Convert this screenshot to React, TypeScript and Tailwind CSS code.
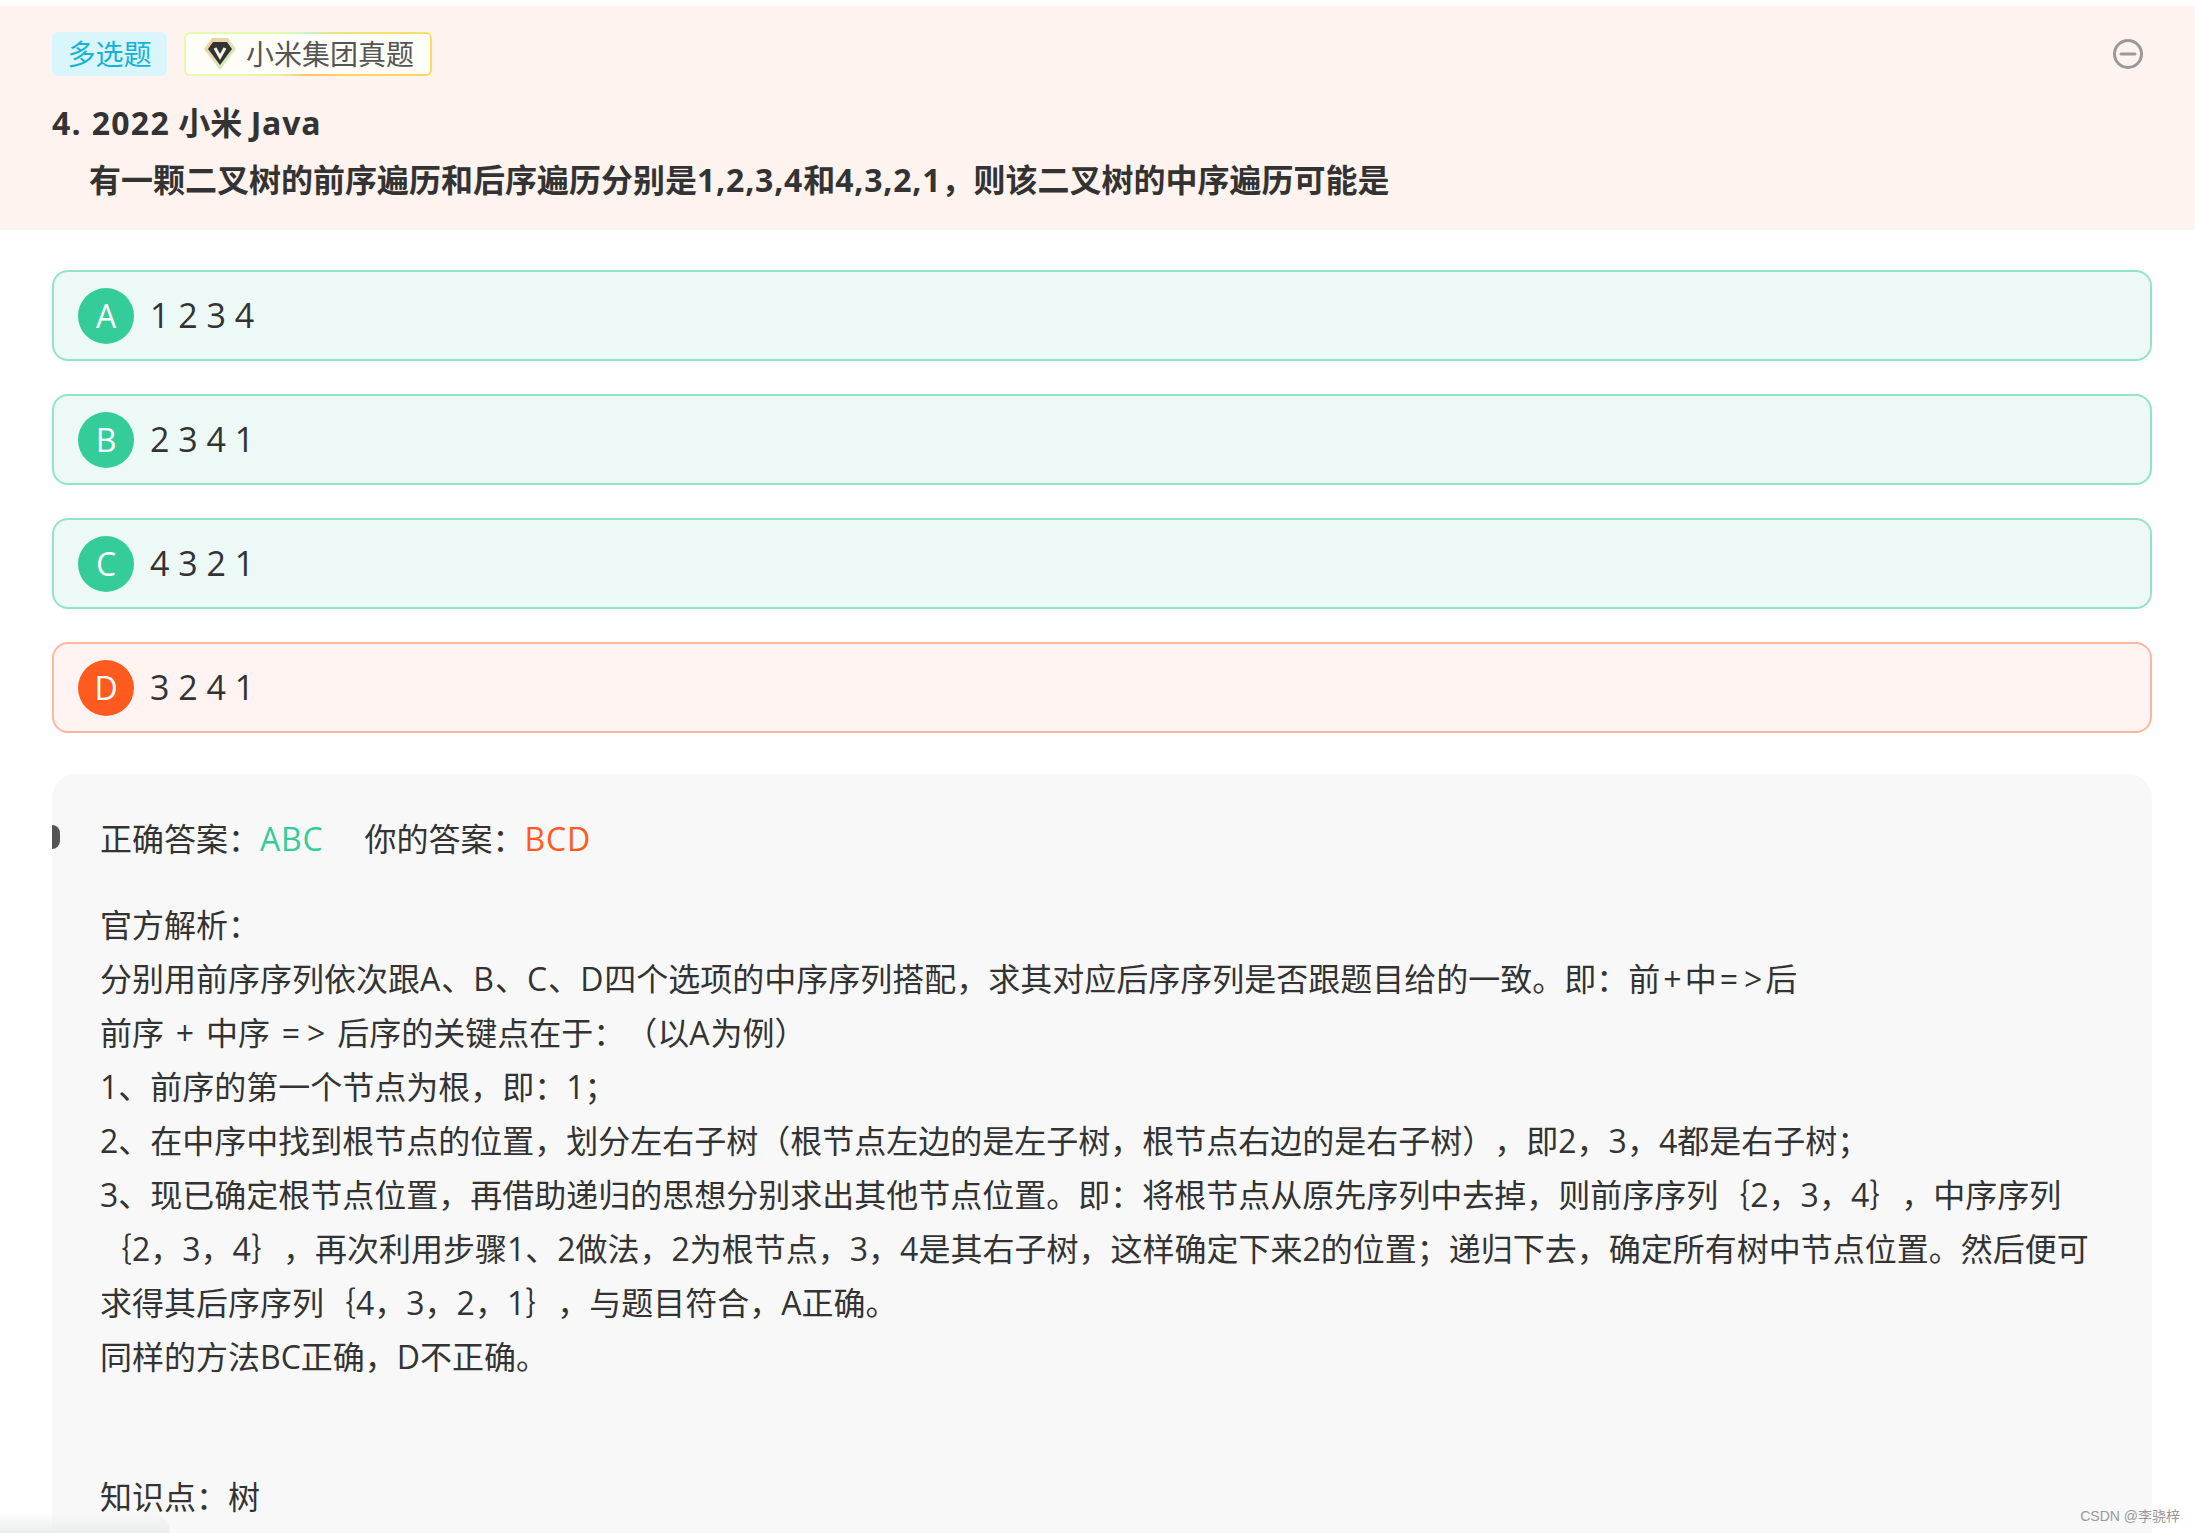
const font = "font-['Open_Sans','Noto_Sans_CJK_SC',sans-serif]"

const options = [
    { key: "A", text: "1 2 3 4", wrong: false },
    { key: "B", text: "2 3 4 1", wrong: false },
    { key: "C", text: "4 3 2 1", wrong: false },
    { key: "D", text: "3 2 4 1", wrong: true },
]

// math signs run wider in the reference than in Open Sans
const Op = ({ s }: { s: string }) => <span className="px-[3.5px]">{s}</span>
const Wide = ({ s }: { s: string }) => <span className="tracking-[1px]">{s}</span>

const analysis = [
    <>官方解析：</>,
    <>
        分别用前序序列依次跟<Wide s="A" />、<Wide s="B" />、<Wide s="C" />、<Wide s="D" />四个选项的中序序列搭配，求其对应后序序列是否跟题目给的一致。即：前
        <span className="px-[3px]">+</span>中<span className="px-[3px]">=</span><span className="px-[3px]">&gt;</span>后
    </>,
    <>
        前序 <Op s="+" /> 中序 <Op s="=" /><Op s=">" /> 后序的关键点在于：（以<Wide s="A" />为例）
    </>,
    <>1、前序的第一个节点为根，即：1；</>,
    <>2、在中序中找到根节点的位置，划分左右子树（根节点左边的是左子树，根节点右边的是右子树），即2，3，4都是右子树；</>,
    <>3、现已确定根节点位置，再借助递归的思想分别求出其他节点位置。即：将根节点从原先序列中去掉，则前序序列｛2，3，4｝，中序序列</>,
    <>｛2，3，4｝，再次利用步骤1、2做法，2为根节点，3，4是其右子树，这样确定下来2的位置；递归下去，确定所有树中节点位置。然后便可</>,
    <>求得其后序序列｛4，3，2，1｝，与题目符合，A正确。</>,
    <>同样的方法BC正确，D不正确。</>,
]

const App = () => {
    return (
        <div className={`relative h-[1533px] overflow-hidden bg-white pt-[6px] text-[#333] [text-spacing-trim:space-all] ${font}`}>
            <div className="relative h-[224px] bg-[#fff3ef] pl-[52px] pt-[26px]">
                <div className="flex h-[44px] items-center gap-[17px]">
                    <span className="flex h-[44px] w-[115px] items-center justify-center rounded-[6px] bg-[#d9f6fd] text-[28px] text-[#12b3d6]">
                        多选题
                    </span>
                    <div className="h-[44px] w-[248px] rounded-[6px] bg-[conic-gradient(#c0f8cc,#ffdc5a_25%,#ffc069_50%,#e3fbad_70%,#e3fbad_85%,#c0f8cc)] p-[2px]">
                        <div className="flex h-full items-center gap-[9px] rounded-[4px] bg-[#fffdf7] pl-[17px] text-[28px] text-[#555]">
                            <svg width="34" height="34" viewBox="0 0 34 34">
                                <defs>
                                    <linearGradient id="halo" x1="0" y1="0" x2="1" y2="1">
                                        <stop offset="0" stopColor="#f8c9a0" />
                                        <stop offset="1" stopColor="#c4f5c4" />
                                    </linearGradient>
                                </defs>
                                <path d="M9 1h16l8 11-16 21L1 12z" fill="url(#halo)" />
                                <path d="M10 5h14l5 7-12 16L5 12z" fill="#333" />
                                <path d="M12 11l5 9 5-9" fill="none" stroke="#f4f4e8" strokeWidth="3" />
                            </svg>
                            <span>小米集团真题</span>
                        </div>
                    </div>
                </div>
                <h2 className="mt-[20px] text-[32px] font-bold leading-[54px]">
                    <span className="tracking-[1.3px]">4. 2022</span> 小米 <span className="tracking-[0.8px]">Java</span>
                </h2>
                <p className="mt-[3px] pl-[37px] text-[32px] font-bold leading-[54px]">
                    有一颗二叉树的前序遍历和后序遍历分别是<span className="tracking-[0.8px]">1,2,3,4</span>和<span className="tracking-[0.8px]">4,3,2,1</span>，则该二叉树的中序遍历可能是
                </p>
                <svg className="absolute right-[51px] top-[32px]" width="32" height="32" viewBox="0 0 32 32" fill="none" stroke="#999" strokeWidth="3">
                    <circle cx="16" cy="16" r="13.5" />
                    <path d="M9 16h14" strokeLinecap="round" />
                </svg>
            </div>

            <div className="ml-[52px] mr-[43px] mt-[40px] flex flex-col gap-[33px]">
                {options.map((o) => (
                    <div
                        key={o.key}
                        className={
                            o.wrong
                                ? "flex h-[91px] items-center gap-[16px] rounded-[16px] border-2 border-[#ffb5a0] bg-[#fff4f1] pl-[24px]"
                                : "flex h-[91px] items-center gap-[16px] rounded-[16px] border-2 border-[#94e3c8] bg-[#ecf9f6] pl-[24px]"
                        }
                    >
                        <span
                            className={
                                o.wrong
                                    ? "flex size-[56px] items-center justify-center rounded-full bg-[#ff5a1f] text-[32px] text-white"
                                    : "flex size-[56px] items-center justify-center rounded-full bg-[#34cc99] text-[32px] text-white"
                            }
                        >
                            {o.key}
                        </span>
                        <span className="text-[34px]">{o.text}</span>
                    </div>
                ))}
            </div>

            <div className="relative ml-[52px] mr-[43px] mt-[41px] h-[800px] rounded-t-[24px] bg-[#f8f8f8] pl-[48px] pt-[38px] text-[32px] leading-[54px]">
                <span className="absolute left-0 top-[51px] h-[24px] w-[8px] rounded-r-full bg-[#555]"></span>
                <div className="whitespace-nowrap">
                    正确答案：<span className="tracking-[0.8px] text-[#34cc99]">ABC</span>
                    <span className="ml-[41px]">你的答案：</span>
                    <span className="tracking-[0.8px] text-[#ff5a1f]">BCD</span>
                </div>
                <div className="mt-[32px] whitespace-nowrap">
                    {analysis.map((line, i) => (
                        <div key={i}>{line}</div>
                    ))}
                </div>
                <div className="mt-[86px]">知识点：树</div>
            </div>

            <div className="absolute bottom-0 left-0 h-[20px] w-[170px] rounded-tr-full bg-gradient-to-t from-[#ebecec] to-transparent"></div>

            <span className="absolute bottom-[10px] right-[15px] font-['Liberation_Sans','Noto_Sans_CJK_SC',sans-serif] text-[14px] leading-none text-[#999]">
                CSDN @李骁梓
            </span>
        </div>
    )
}

export default App
